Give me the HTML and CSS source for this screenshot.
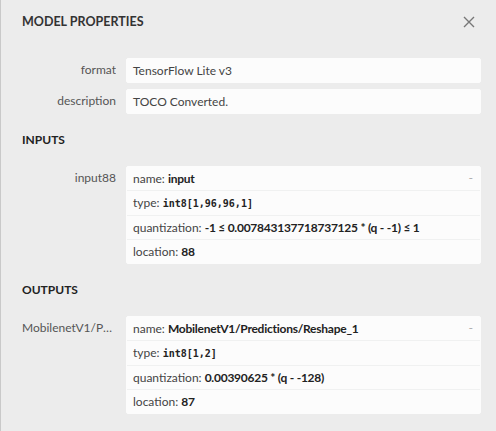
FILE: index.html
```html
<!DOCTYPE html>
<html>
<head>
<meta charset="utf-8">
<link rel="stylesheet" href="styles.css">
</head>
<body>
<div class="sidebar">
  <div class="title-bar">
    <div class="title">MODEL PROPERTIES</div>
    <svg class="close" width="12" height="12" viewBox="0 0 12 12"><path d="M1 1 L11 11 M11 1 L1 11" stroke="#777" stroke-width="1.4" fill="none"/></svg>
  </div>
  <div class="content">
    <div class="item">
      <div class="name">format</div>
      <div class="values">
        <div class="value"><div class="line">TensorFlow Lite v3</div></div>
      </div>
    </div>
    <div class="item">
      <div class="name">description</div>
      <div class="values">
        <div class="value"><div class="line">TOCO Converted.</div></div>
      </div>
    </div>

    <div class="header">Inputs</div>
    <div class="item">
      <div class="name">input88</div>
      <div class="values">
        <div class="value">
          <span class="expander">-</span>
          <div class="line">name: <b>input</b></div>
          <div class="line border">type: <code>int8[1,96,96,1]</code></div>
          <div class="line border">quantization: <b>-1 ≤ 0.007843137718737125 * (q - -1) ≤ 1</b></div>
          <div class="line border">location: <b>88</b></div>
        </div>
      </div>
    </div>

    <div class="header">Outputs</div>
    <div class="item">
      <div class="name">MobilenetV1/Predictions/Reshape_1</div>
      <div class="values">
        <div class="value">
          <span class="expander">-</span>
          <div class="line">name: <b>MobilenetV1/Predictions/Reshape_1</b></div>
          <div class="line border">type: <code>int8[1,2]</code></div>
          <div class="line border">quantization: <b>0.00390625 * (q - -128)</b></div>
          <div class="line border">location: <b>87</b></div>
        </div>
      </div>
    </div>
  </div>
</div>
</body>
</html>
```

FILE: styles.css
```css
html, body {
  margin: 0;
  padding: 0;
  height: 100%;
}
body {
  background: #ececec;
  font-family: Lato, "Open Sans", sans-serif;
  color: #333;
}
.sidebar {
  box-sizing: border-box;
  min-height: 100%;
  border-left: 1px solid #c9c9c9;
}
.title-bar {
  display: flex;
  align-items: flex-start;
  justify-content: space-between;
  padding: 14px 20px 25px 21px;
}
.title {
  font-weight: bold;
  font-size: 12.5px;
  line-height: 16px;
  letter-spacing: 0;
  color: #333;
}
.close {
  margin-top: 2px;
  margin-right: 1px;
}
.content {
  padding: 0 15px 0 21px;
}
.item {
  display: grid;
  grid-template-columns: 94px 1fr;
  column-gap: 10px;
}
.name {
  font-size: 12px;
  line-height: 15px;
  padding-top: 7px;
  text-align: right;
  white-space: nowrap;
  overflow: hidden;
  text-overflow: ellipsis;
  color: #555;
}
.value {
  font-size: 12px;
  line-height: 15px;
  background: #fcfcfc;
  border: 1px solid #fcfcfc;
  border-radius: 2px;
  margin: 3px 0;
  color: #444;
}
.line {
  padding: 4px 6px;
  white-space: nowrap;
}
.line.border {
  border-top: 1px solid rgba(27, 31, 35, 0.05);
}
.line b {
  color: #222;
  font-weight: bold;
  letter-spacing: -0.25px;
}
.line code {
  font-family: "DejaVu Sans Mono", "Liberation Mono", monospace;
  font-size: 10px;
  font-weight: bold;
  color: #222;
}
.expander {
  float: right;
  color: #aaa;
  padding: 4px 6px;
  font-family: "Liberation Mono", monospace;
  font-size: 11px;
  line-height: 15px;
}
.header {
  font-weight: bold;
  font-size: 12px;
  line-height: 15px;
  text-transform: uppercase;
  margin: 15px 0;
  border-bottom: 1px solid #ececec;
  color: #222;
}
```
